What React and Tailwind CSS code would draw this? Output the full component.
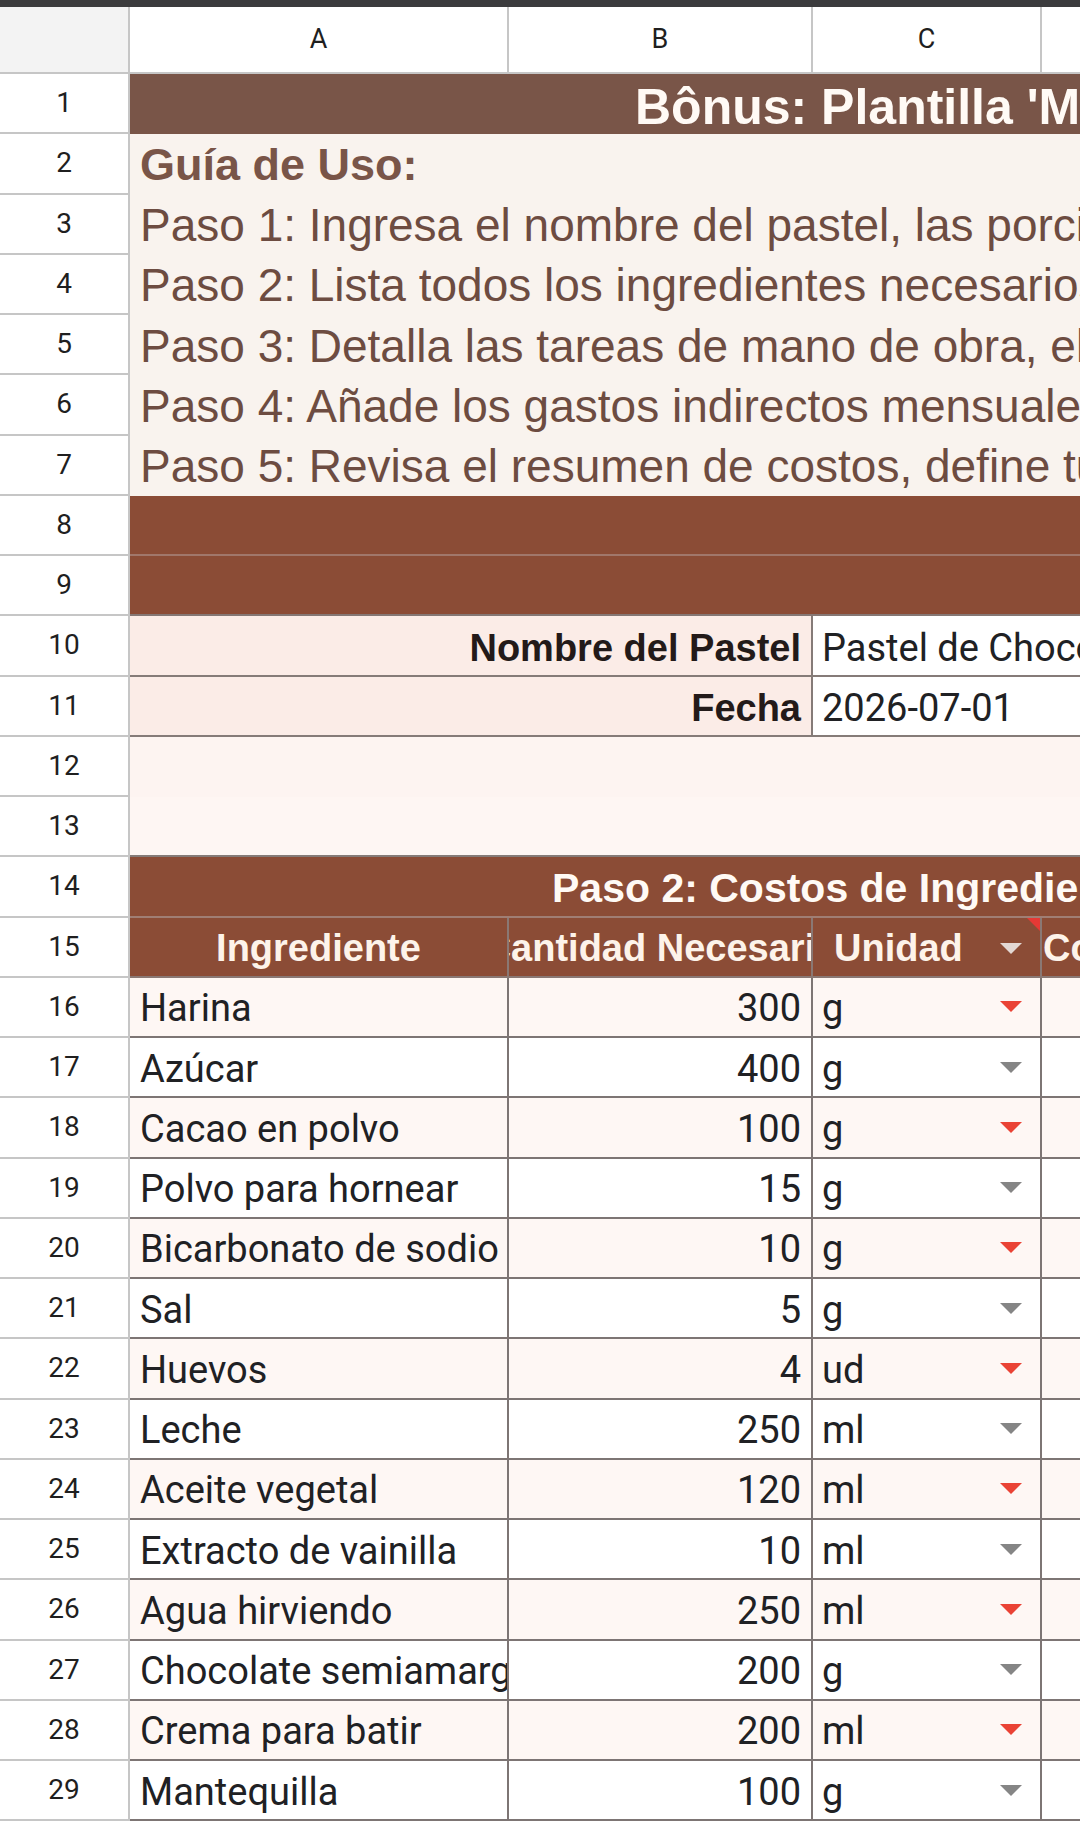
import React from "react";

const data = [
  ["Harina", "300", "g"],
  ["Azúcar", "400", "g"],
  ["Cacao en polvo", "100", "g"],
  ["Polvo para hornear", "15", "g"],
  ["Bicarbonato de sodio", "10", "g"],
  ["Sal", "5", "g"],
  ["Huevos", "4", "ud"],
  ["Leche", "250", "ml"],
  ["Aceite vegetal", "120", "ml"],
  ["Extracto de vainilla", "10", "ml"],
  ["Agua hirviendo", "250", "ml"],
  ["Chocolate semiamargo", "200", "g"],
  ["Crema para batir", "200", "ml"],
  ["Mantequilla", "100", "g"],
];

const pasos = [
  "Paso 1: Ingresa el nombre del pastel, las porciones que rinde y la fecha.",
  "Paso 2: Lista todos los ingredientes necesarios con su cantidad y costo.",
  "Paso 3: Detalla las tareas de mano de obra, el tiempo y tu tarifa por hora.",
  "Paso 4: Añade los gastos indirectos mensuales y cuántos pasteles haces.",
  "Paso 5: Revisa el resumen de costos, define tu margen y obtén el precio.",
];

function Arrow({ color }) {
  return (
    <svg width="22" height="11" viewBox="0 0 22 11" className="shrink-0">
      <path d="M0 0 L22 0 L11 11 Z" fill={color} />
    </svg>
  );
}

function Row({ n, children }) {
  return (
    <div className="flex h-[60.25px]">
      <div className="w-[130px] shrink-0 flex items-center justify-center bg-white border-r-2 border-b-2 border-[#c6c6c6] font-['Roboto',sans-serif] text-[28px] text-[#1f1f1f]">
        {n}
      </div>
      <div className="flex flex-1 min-w-0 overflow-hidden">{children}</div>
    </div>
  );
}

export default function App() {
  return (
    <div className="w-[1080px] h-[1821px] overflow-hidden bg-white">
      <div className="h-[7px] bg-[#3b3b3d]" />
      {/* column headers */}
      <div className="flex h-[67px] border-b-2 border-[#c6c6c6] font-['Roboto',sans-serif] text-[27px] text-[#1f1f1f]">
        <div className="w-[130px] shrink-0 bg-[#f3f3f3] border-r-2 border-[#c6c6c6]" />
        <div className="w-[379px] shrink-0 flex items-center justify-center border-r-2 border-[#c6c6c6]">A</div>
        <div className="w-[304px] shrink-0 flex items-center justify-center border-r-2 border-[#c6c6c6]">B</div>
        <div className="w-[229px] shrink-0 flex items-center justify-center border-r-2 border-[#c6c6c6]">C</div>
        <div className="flex-1" />
      </div>

      {/* row 1 */}
      <Row n={1}>
        <div className="w-full bg-[#795548] flex items-end overflow-hidden whitespace-nowrap pl-[505px] pb-[2px] font-['Liberation_Sans',Arial,sans-serif] font-bold text-[50px] leading-none text-[#fffaf5]">
          Bônus: Plantilla 'Mi Pastel Rentable'
        </div>
      </Row>
      {/* row 2 */}
      <Row n={2}>
        <div className="w-full bg-[#f9f3ee] flex items-center overflow-hidden whitespace-nowrap pl-[10px] font-['Liberation_Sans',Arial,sans-serif] font-bold text-[45px] text-[#795548]">
          Guía de Uso:
        </div>
      </Row>
      {pasos.map((p, i) => (
        <Row key={i} n={3 + i}>
          <div className="w-full bg-[#f9f3ee] flex items-center overflow-hidden whitespace-nowrap pl-[10px] pt-[2px] font-['Liberation_Sans',Arial,sans-serif] text-[46px] text-[#6d4c41]">
            {p}
          </div>
        </Row>
      ))}
      {/* rows 8-9 */}
      <Row n={8}>
        <div className="w-full bg-[#8b4c36] border-b-2 border-[#a1776b]" />
      </Row>
      <Row n={9}>
        <div className="w-full bg-[#8b4c36] border-b-2 border-[#857774]" />
      </Row>
      {/* rows 10-11 */}
      <Row n={10}>
        <div className="w-[683px] shrink-0 bg-[#fbece7] border-r-2 border-b-2 border-[#857b78] flex items-center justify-end pr-[10px] pt-[6px] font-['Liberation_Sans',Arial,sans-serif] font-bold text-[38px] text-[#231a19] whitespace-nowrap">
          Nombre del Pastel
        </div>
        <div className="flex-1 bg-white border-b-2 border-[#857b78] flex items-center pl-[9px] pt-[6px] font-['Roboto',sans-serif] text-[38px] text-[#202124] whitespace-nowrap overflow-hidden">
          Pastel de Chocolate Clásico
        </div>
      </Row>
      <Row n={11}>
        <div className="w-[683px] shrink-0 bg-[#fbece7] border-r-2 border-b-2 border-[#857b78] flex items-center justify-end pr-[10px] pt-[6px] font-['Liberation_Sans',Arial,sans-serif] font-bold text-[38px] text-[#231a19] whitespace-nowrap">
          Fecha
        </div>
        <div className="flex-1 bg-white border-b-2 border-[#857b78] flex items-center pl-[9px] pt-[6px] font-['Roboto',sans-serif] text-[38px] text-[#202124] whitespace-nowrap overflow-hidden">
          2026-07-01
        </div>
      </Row>
      {/* rows 12-13 */}
      <Row n={12}>
        <div className="w-full bg-[#fdf4f1]" />
      </Row>
      <Row n={13}>
        <div className="w-full bg-[#fef6f3] border-b-2 border-[#857b78]" />
      </Row>
      {/* row 14 */}
      <Row n={14}>
        <div className="w-full bg-[#8b4c36] border-b-2 border-[#a07e74] flex items-center overflow-hidden whitespace-nowrap pl-[422px] pt-[4px] font-['Liberation_Sans',Arial,sans-serif] font-bold text-[41px] text-[#fffaf5]">
          Paso 2: Costos de Ingredientes
        </div>
      </Row>
      {/* row 15 header */}
      <Row n={15}>
        <div className="w-[379px] shrink-0 bg-[#8b4c36] border-r-2 border-b-2 border-[#8a7874] flex items-center justify-center pt-[4px] overflow-hidden whitespace-nowrap font-['Liberation_Sans',Arial,sans-serif] font-bold text-[38px] text-[#fdf3ea]">
          Ingrediente
        </div>
        <div className="w-[304px] shrink-0 bg-[#8b4c36] border-r-2 border-b-2 border-[#8a7874] flex items-center justify-center pt-[4px] overflow-hidden whitespace-nowrap font-['Liberation_Sans',Arial,sans-serif] font-bold text-[38px] text-[#fdf3ea]">
          Cantidad Necesaria
        </div>
        <div className="relative w-[229px] shrink-0 bg-[#8b4c36] border-r-2 border-b-2 border-[#8a7874] flex items-center justify-between pl-[21px] pr-[18px] pt-[4px] overflow-hidden whitespace-nowrap font-['Liberation_Sans',Arial,sans-serif] font-bold text-[38px] text-[#fdf3ea]">
          <span>Unidad</span>
          <Arrow color="#e3d8d4" />
          <svg width="13" height="13" viewBox="0 0 13 13" className="absolute top-0 right-0">
            <path d="M0 0 L13 0 L13 13 Z" fill="#e53935" />
          </svg>
        </div>
        <div className="w-[300px] shrink-0 bg-[#8b4c36] border-b-2 border-[#8a7874] flex items-center pl-[1px] pt-[4px] overflow-hidden whitespace-nowrap font-['Liberation_Sans',Arial,sans-serif] font-bold text-[38px] text-[#fdf3ea]">
          Costo Unitario
        </div>
      </Row>
      {/* data rows */}
      {data.map(([name, qty, unit], i) => {
        const alt = i % 2 === 0;
        const bg = alt ? "bg-[#fef7f4]" : "bg-white";
        return (
          <Row key={name} n={16 + i}>
            <div className={`w-[379px] shrink-0 ${bg} border-r-2 border-b-2 border-[#7d7574] flex items-center pl-[10px] pt-[4px] overflow-hidden whitespace-nowrap font-['Roboto',sans-serif] text-[38px] text-[#202124]`}>
              {name}
            </div>
            <div className={`w-[304px] shrink-0 ${bg} border-r-2 border-b-2 border-[#7d7574] flex items-center justify-end pr-[10px] pt-[4px] overflow-hidden whitespace-nowrap font-['Roboto',sans-serif] text-[38px] text-[#202124]`}>
              {qty}
            </div>
            <div className={`w-[229px] shrink-0 ${bg} border-r-2 border-b-2 border-[#7d7574] flex items-center justify-between pl-[9px] pr-[18px] overflow-hidden whitespace-nowrap font-['Roboto',sans-serif] text-[38px] text-[#202124]`}>
              <span className="pt-[4px]">{unit}</span>
              <Arrow color={alt ? "#ea4335" : "#858585"} />
            </div>
            <div className={`w-[300px] shrink-0 ${bg} border-b-2 border-[#7d7574]`} />
          </Row>
        );
      })}
    </div>
  );
}
